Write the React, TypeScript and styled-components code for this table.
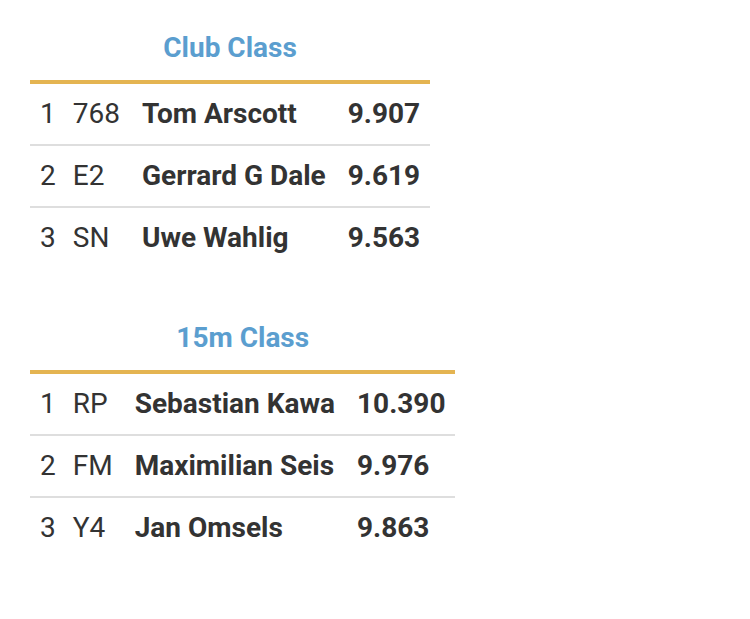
import React from "react";
import styled, { createGlobalStyle } from "styled-components";

const GlobalStyle = createGlobalStyle`
  html, body {
    margin: 0;
    padding: 0;
    background: #ffffff;
  }
  body {
    font-family: Roboto, "Noto Sans", "Liberation Sans", sans-serif;
    color: #333333;
  }
`;

const Page = styled.div`
  display: flex;
  flex-direction: column;
  align-items: flex-start;
  gap: 22px;
  padding-left: 30px;
`;

const Table = styled.table`
  border-collapse: separate;
  border-spacing: 0;
  border-top: 4px solid #e4b451;
  font-size: 28px;
`;

const Caption = styled.caption`
  caption-side: top;
  text-align: center;
  font-weight: 700;
  font-size: 28px;
  line-height: 32px;
  color: #5b9ecf;
  padding: 32px 0 16px;
`;

const Row = styled.tr<{ $last?: boolean }>`
  & > td {
    border-bottom: ${(p) => (p.$last ? "none" : "2px solid #dedede")};
  }
`;

const Cell = styled.td<{ $kind: "rank" | "no" | "name" | "score" }>`
  height: 60px;
  padding: 0 11px;
  vertical-align: middle;
  white-space: nowrap;
  line-height: 1;
  color: #333333;
  font-weight: ${(p) => (p.$kind === "name" || p.$kind === "score" ? 700 : 400)};
  ${(p) => (p.$kind === "rank" ? "padding: 0 5px 0 10px;" : "")}
  ${(p) => (p.$kind === "no" ? "padding: 0 11px 0 12px;" : "")}
  ${(p) => (p.$kind === "score" ? "padding: 0 10px 0 11px;" : "")}
`;

type Entry = { rank: number; no: string; name: string; score: string };

const classes: { title: string; entries: Entry[] }[] = [
  {
    title: "Club Class",
    entries: [
      { rank: 1, no: "768", name: "Tom Arscott", score: "9.907" },
      { rank: 2, no: "E2", name: "Gerrard G Dale", score: "9.619" },
      { rank: 3, no: "SN", name: "Uwe Wahlig", score: "9.563" },
    ],
  },
  {
    title: "15m Class",
    entries: [
      { rank: 1, no: "RP", name: "Sebastian Kawa", score: "10.390" },
      { rank: 2, no: "FM", name: "Maximilian Seis", score: "9.976" },
      { rank: 3, no: "Y4", name: "Jan Omsels", score: "9.863" },
    ],
  },
];

export default function App() {
  return (
    <>
      <GlobalStyle />
      <Page>
        {classes.map((c) => (
          <Table key={c.title}>
            <Caption>{c.title}</Caption>
            <tbody>
              {c.entries.map((e, i) => (
                <Row key={e.rank} $last={i === c.entries.length - 1}>
                  <Cell $kind="rank">{e.rank}</Cell>
                  <Cell $kind="no">{e.no}</Cell>
                  <Cell $kind="name">{e.name}</Cell>
                  <Cell $kind="score">{e.score}</Cell>
                </Row>
              ))}
            </tbody>
          </Table>
        ))}
      </Page>
    </>
  );
}
